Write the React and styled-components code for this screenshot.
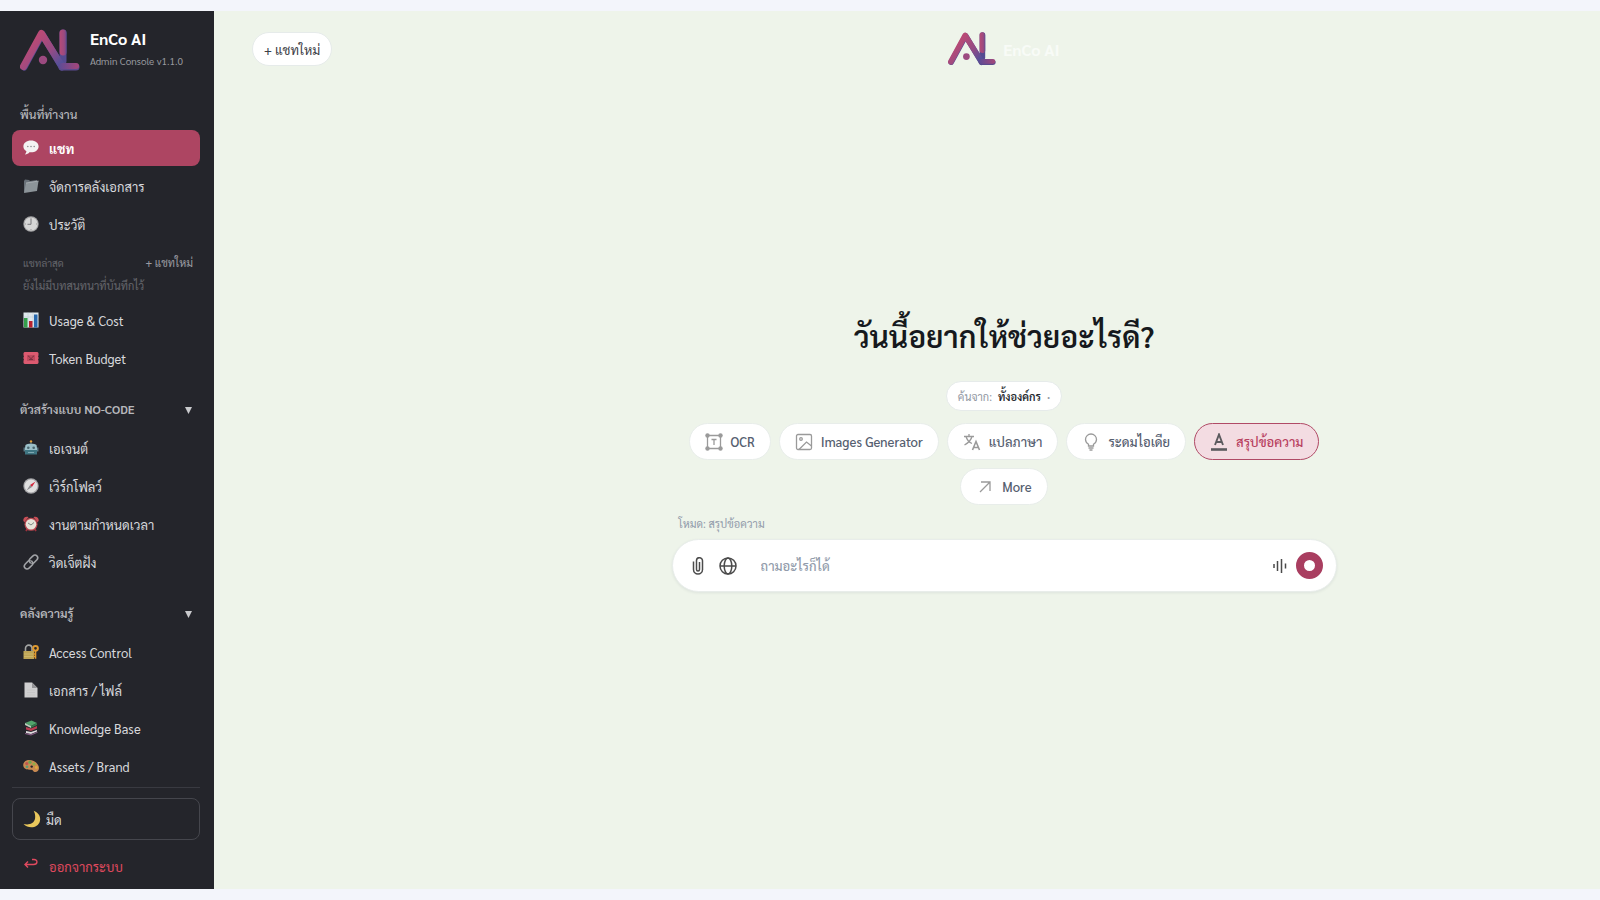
import React, { useState } from 'react';
import styled, { createGlobalStyle } from 'styled-components';

const GlobalStyle = createGlobalStyle`
  *, *::before, *::after { box-sizing: border-box; }

  body {
    margin: 0;
    background-color: #f3f5fb;
    font-family: Sarabun, "Noto Sans Thai Looped", Lato, "Noto Sans Thai", sans-serif;
    font-size: 13px;
    color: #1f2328;
  }

  button, input {
    font: inherit;
    color: inherit;
  }

  button { cursor: pointer; }
  a { text-decoration: none; }
`;

const Page = styled.div`
  display: flex;
  height: 100vh;
  padding: 11px 0;
`;

// Sidebar
const Sidebar = styled.aside`
  display: flex;
  flex-direction: column;
  flex: none;
  width: 214px;
  padding: 16px 14px 5px 12px;
  background-color: #24252b;
  color: #d7d8dc;
`;

const BrandRow = styled.div`
  display: flex;
  align-items: center;
  gap: 10px;
  padding-left: 8px;
  height: 46px;
  margin-bottom: 29px;
`;

const BrandName = styled.div`
  font-size: 16px;
  line-height: 22px;
  font-weight: 700;
  color: #ffffff;
`;

const BrandMeta = styled.div`
  font-size: 10px;
  line-height: 22px;
  white-space: nowrap;
  color: #97989e;
`;

const Nav = styled.nav`
  flex: 1;
  min-height: 0;
  overflow: hidden;
`;

const NavTitle = styled.h2`
  margin: 0 0 4px;
  padding: 0 8px;
  font-size: 12px;
  line-height: 24px;
  font-weight: 500;
  color: #b6b7bc;
`;

const NavToggle = styled.button`
  display: flex;
  align-items: center;
  justify-content: space-between;
  width: 100%;
  height: 24px;
  margin: 21px 0 9px;
  padding: 0 8px;
  border: 0;
  background: none;
  font-size: 12px;
  font-weight: 600;
  color: #b6b7bc;
`;

const NavList = styled.ul`
  display: flex;
  flex-direction: column;
  gap: 2px;
  margin: 0;
  padding: 0;
  list-style: none;
`;

const NavLink = styled.a`
  display: flex;
  align-items: center;
  gap: 10px;
  height: 36px;
  padding: 0 11px;
  border-radius: 8px;
  font-weight: ${(props) => (props.$active ? 700 : 400)};
  color: ${(props) => (props.$danger ? '#e04a5f' : props.$active ? '#ffffff' : '#d7d8dc')};
  background-color: ${(props) => (props.$active ? '#ad4562' : 'transparent')};
`;

const Recent = styled.div`
  padding: 9px 7px 5px 11px;
  font-size: 11px;
  line-height: 23px;
  color: #64656c;
`;

const RecentHead = styled.div`
  display: flex;
  justify-content: space-between;
  font-size: 10px;
`;

const RecentNew = styled.button`
  padding: 0;
  border: 0;
  background: none;
  font-size: 11px;
  color: #9a9ba1;
`;

const SidebarFooter = styled.div`
  padding-top: 10px;
  border-top: 1px solid #393a41;
`;

const ThemeButton = styled.button`
  display: flex;
  align-items: center;
  gap: 5px;
  width: 100%;
  height: 42px;
  margin-bottom: 8px;
  padding: 0 10px;
  border: 1px solid #45464d;
  border-radius: 8px;
  background: none;
`;

// Main area
const Main = styled.main`
  display: flex;
  flex-direction: column;
  flex: 1;
  min-width: 0;
  background-color: #eef4ea;
`;

const TopBar = styled.header`
  display: grid;
  grid-template-columns: 194px 1fr;
  align-items: center;
  height: 76px;
`;

const NewChat = styled.button`
  justify-self: start;
  height: 34px;
  margin-left: 38px;
  padding: 0 11px;
  border: 1px solid #e6ebea;
  border-radius: 17px;
  background-color: #ffffff;
  color: #3c4046;
`;

const TopBrand = styled.div`
  display: flex;
  align-items: center;
  justify-self: center;
  gap: 7px;
  font-size: 16px;
  font-weight: 700;
  color: #f8fbf7;
`;

const Hero = styled.section`
  display: flex;
  flex-direction: column;
  align-items: center;
  padding: 220px 0 0 194px;
`;

const Heading = styled.h1`
  margin: 0 0 16px;
  font-size: 30px;
  line-height: 58px;
  font-weight: 600;
  color: #16191d;
`;

const Scope = styled.button`
  display: flex;
  align-items: center;
  gap: 6px;
  height: 30px;
  margin-bottom: 12px;
  padding: 0 11px;
  border: 1px solid #e6ebea;
  border-radius: 15px;
  background-color: #ffffff;
  font-size: 11px;
  color: #9298a3;

  b {
    font-weight: 600;
    color: #24282d;
  }

  span { font-weight: 700; }
`;

const Chips = styled.div`
  display: flex;
  flex-wrap: wrap;
  justify-content: center;
  gap: 8px;
  width: 665px;
  max-width: 100%;
  margin-bottom: 8px;
`;

const Chip = styled.button`
  display: flex;
  align-items: center;
  gap: 8px;
  height: 37px;
  padding: 0 15px;
  border: 1px solid ${(props) => (props.$active ? '#b04a66' : '#e8edea')};
  border-radius: 19px;
  background-color: ${(props) => (props.$active ? '#f3dce2' : '#ffffff')};
  font-weight: 500;
  color: ${(props) => (props.$active ? '#b8415f' : '#566070')};

  svg { color: ${(props) => (props.$active ? '#5b5a5e' : '#9a9a9a')}; }
`;

const Composer = styled.form`
  width: 665px;
  max-width: 100%;
`;

const Mode = styled.label`
  display: block;
  padding-left: 7px;
  font-size: 11px;
  line-height: 22px;
  color: #929cab;
  margin-bottom: 4px;
`;

const InputBar = styled.div`
  display: flex;
  align-items: center;
  height: 53px;
  padding: 0 13px 0 16px;
  border: 1px solid #e8edea;
  border-radius: 27px;
  background-color: #ffffff;
  box-shadow: 0 1px 3px rgba(30, 40, 60, 0.08);
`;

const IconButton = styled.button`
  display: flex;
  margin-right: ${(props) => (props.$tight ? '7px' : '12px')};
  padding: 0;
  border: 0;
  background: none;
  color: #4b4b4b;
`;

const Prompt = styled.input`
  flex: 1;
  min-width: 0;
  padding: 0 12px;
  border: 0;
  outline: 0;
  background: none;
  font-weight: 500;

  &::placeholder {
    color: #929cab;
    opacity: 1;
  }
`;

const Record = styled.button`
  width: 27px;
  height: 27px;
  padding: 0;
  border: 8px solid #a93e60;
  border-radius: 50%;
  background-color: #ffffff;
`;

const Logo = ({ width, id }) => (
  <svg width={width} viewBox="0 0 60 44" fill="none" aria-hidden="true">
    <defs>
      <linearGradient id={id} x1="0" y1="0" x2="46" y2="44" gradientUnits="userSpaceOnUse">
        <stop offset="0.3" stopColor="#b84a76" />
        <stop offset="0.6" stopColor="#944b84" />
        <stop offset="0.85" stopColor="#54509a" />
        <stop offset="1" stopColor="#8a477f" />
      </linearGradient>
      <linearGradient id={`${id}-stem`} x1="40" y1="0" x2="47" y2="0" gradientUnits="userSpaceOnUse">
        <stop stopColor="#b34a78" />
        <stop offset="0.6" stopColor="#9b4a80" />
        <stop offset="1" stopColor="#554b91" />
      </linearGradient>
      <linearGradient id={`${id}-bar`} x1="38" y1="0" x2="60" y2="0" gradientUnits="userSpaceOnUse">
        <stop stopColor="#5a4c98" />
        <stop offset="1" stopColor="#a94678" />
      </linearGradient>
    </defs>
    <g strokeWidth="7" strokeLinecap="round" strokeLinejoin="round">
      <path d="M43 5v28" stroke="#554b91" />
      <path d="M43 5L43.100 24" stroke={`url(#${id}-stem)`} />
      <path d="M4 39 22 6l20 33" stroke="#554b91" />
      <path d="M3.500 38.500 21.500 5.500l20 32" stroke={`url(#${id})`} />
      <path d="M42 39h14" stroke="#5b4a8d" />
      <path d="M42 38h14" stroke={`url(#${id}-bar)`} strokeWidth="6" />
    </g>
    <circle cx="23" cy="32" r="4.200" fill="#9c4a80" />
  </svg>
);

const Emoji = ({ size = 16, children }) => (
  <svg width={size} height={size} viewBox="0 0 16 16" fill="none" aria-hidden="true">
    {children}
  </svg>
);

const glyphs = {
  chat: (
    <>
      <path d="M8 .5C3.600.5.4 3 .4 6.400c0 2 1.200 3.700 3 4.800-.1 1.300-.7 2.400-1.500 3.300 2-.2 3.600-1 4.500-2.300.5.1 1 .1 1.600.1 4.400 0 7.600-2.500 7.600-5.900S12.400.5 8 .5Z" fill="#f4f2f2" />
      <g fill="#8f8f93"><circle cx="4.800" cy="6.500" r="0.800" /><circle cx="8" cy="6.500" r="0.800" /><circle cx="11.200" cy="6.500" r="0.800" /></g>
    </>
  ),
  folder: (
    <>
      <path d="m1 3 1-1.500 4 .4 1 1.200 7-1.100v10L1 14Z" fill="#687078" />
      <path d="m3 5 12.500-2-1.500 10L1 15Z" fill="#8c9499" />
      <path d="m3 5 12.500-2" stroke="#c2c7ca" strokeWidth="0.600" />
    </>
  ),
  clock: (
    <>
      <circle cx="8" cy="8" r="7.700" fill="#a5a5a6" />
      <circle cx="8" cy="8" r="6.600" fill="#d6d6d6" />
      <path d="M8 3v5.300H4.500" stroke="#77777b" />
      <path d="M8 2v1M8 13v1M2 8h1M13 8h1" stroke="#999" />
    </>
  ),
  chart: (
    <>
      <path d="M.5.5h15v15H.5z" fill="#dfe8ed" />
      <path d="M.5 5h15M.5 10h15M5 .5v15M10 .5v15" stroke="#b9c9d2" strokeWidth="0.500" />
      <path d="M1 6h3.500v9.500H1z" fill="#35a04b" />
      <path d="M6 9h3.500v6.500H6z" fill="#b9222f" />
      <path d="M11 2.500h3.500v13H11z" fill="#2969ae" />
    </>
  ),
  ticket: (
    <>
      <path d="M1.500 2h13l1 1v2.500l-.6.800.6.700v2l-.6.700.6.800V13l-1 1h-13l-1-1v-2.500l.6-.8-.6-.7V7l.6-.7-.6-.8V3Z" fill="#dc5a70" />
      <path d="M4 5h8v6H4z" fill="#bd4a5e" />
      <path d="M5 6c2 0 2 3 3 3s1-3 3-3M6 9.500h4" stroke="#7d3040" />
    </>
  ),
  robot: (
    <>
      <circle cx="8" cy="1.500" r="1.200" fill="#e2a23b" />
      <path d="M7.500 2.500h1v2h-1z" fill="#718d96" />
      <path d="M2.500 5C4 3.300 12 3.300 13.500 5l.8 5c0 5-12.600 5-12.600 0Z" fill="#9cc1ca" />
      <path d="M2 10h12v4.500H2z" fill="#3f7582" />
      <path d="M.6 7.500h1.200v4H.6zM14.200 7.500h1.200v4h-1.200z" fill="#648894" />
      <circle cx="5.300" cy="7.800" r="1.300" fill="#4a6770" /><circle cx="10.700" cy="7.800" r="1.300" fill="#4a6770" />
      <path d="M5 12.500h6" stroke="#7fa9b3" />
    </>
  ),
  compass: (
    <>
      <circle cx="8" cy="8" r="7.700" fill="#a3a3a6" />
      <circle cx="8" cy="8" r="6.500" fill="#e0e0e0" />
      <path d="m12.500 3.500-3.600 5.400L7 7Z" fill="#d3273c" />
      <path d="m3.500 12.500 3.600-5.400L9 9Z" fill="#8c8c90" />
    </>
  ),
  alarm: (
    <>
      <path d="m3 15 2-3M13 15l-2-3" stroke="#9f323d" strokeWidth="1.800" />
      <path d="M.3 4.800C0 1.800 3 0 5.500 1.300L1.300 6.300ZM15.700 4.800c.3-3-2.700-4.800-5.200-3.500l4.200 5Z" fill="#c94f57" />
      <circle cx="8" cy="8.300" r="6.500" fill="#bb4a52" />
      <circle cx="8" cy="8.300" r="5.300" fill="#e6e4da" />
      <path d="m5 7 3 2 3-2.500" stroke="#7d8a83" />
    </>
  ),
  link: (
    <g stroke="#a1a3a7" strokeWidth="1.600" strokeLinecap="round" strokeLinejoin="round">
      <path d="M7.200 8.800C5.500 7 6 5.800 7 4.800l2.700-2.700c3-2.800 6.800.8 4 3.900L11 8.700c-.6.600-1.300.8-2 .7" />
      <path d="M8.800 7.200C10.500 9 10 10.200 9 11.200l-2.700 2.700c-3 2.800-6.800-.8-4-3.900L5 7.300c.6-.6 1.300-.8 2-.7" />
    </g>
  ),
  lock: (
    <>
      <path d="M2.500 8V4.500c0-4.500 6.500-4.500 6.500 0V8" stroke="#a3a5a4" strokeWidth="1.600" />
      <path d="M.5 7h10.500v8H.5z" fill="#bda455" />
      <path d="M1 10h9M1 12.500h9" stroke="#d6c378" strokeWidth="0.600" />
      <circle cx="12.500" cy="4.300" r="2.400" stroke="#e09a30" strokeWidth="2" />
      <path d="M12.500 6.500v8.200M12.500 10h-2M12.500 12.500h-2" stroke="#e09a30" strokeWidth="1.600" />
    </>
  ),
  file: (
    <>
      <path d="M1.500.5h7.500l5.500 5.500v9.500h-13Z" fill="#cfcfd0" />
      <path d="M9 .5V6h5.500Z" fill="#949497" />
      <path d="M4 8h8M4 10.500h8M4 13h8" stroke="#bdbdbf" strokeWidth="0.500" />
    </>
  ),
  books: (
    <>
      <path d="m2 3 6.500-2.500L14 3 8 6Z" fill="#51a36b" />
      <path d="m2 3 6 3v2L2 5Z" fill="#b9cfbd" /><path d="m8 6 6-3v2L8 8Z" fill="#34764b" />
      <path d="m3 7 5 1.500L14 6v2.500L8 11 3 9.500Z" fill="#b93d51" />
      <path d="m3 11 5 1 6-2v1.500L8 14l-5-1Z" fill="#dddadd" />
      <path d="m2 13 6 1.300 6.500-2.500v1L8 15.500 2 14Z" fill="#875d85" />
    </>
  ),
  palette: (
    <>
      <path d="M3.500 2.500C9 .8 16 5 16 10c0 3-2.500 4.500-4.500 4-1.500-.4-1.500-2-3-2.200C5.500 11.500 2.500 12 .9 9.500-.7 7 .5 3.500 3.500 2.500Z" fill="#c98a52" />
      <circle cx="3.800" cy="5.500" r="1.600" fill="#c0564f" /><circle cx="7" cy="4.200" r="1.600" fill="#6ba650" />
      <circle cx="11" cy="6" r="1.600" fill="#8fae45" /><circle cx="4" cy="8.800" r="1.400" fill="#5d9a72" />
      <circle cx="13.300" cy="9.500" r="1.400" fill="#e0a93c" /><circle cx="8.700" cy="8.600" r="1.200" fill="#24252b" />
    </>
  ),
  moon: <path d="M9.500.7C14 2.500 16 6 15 10c-1.500 6-10 7.300-14.500 2.500 5 1.200 9-.5 10-4 .7-2.600.3-5.400-1-7.800Z" fill="#e9c75c" />,
  exit: <path d="m5 3.500-3 3 3 3M2.500 6.500h8c4.500 0 4.500-5 .5-5H9" stroke="#e04a5f" strokeWidth="1.400" />,
};

const ToolIcon = ({ children, size = 18, strokeWidth = 1.3 }) => (
  <svg
    width={size}
    height={size}
    viewBox="0 0 18 18"
    fill="none"
    stroke="currentColor"
    strokeWidth={strokeWidth}
    aria-hidden="true"
  >
    {children}
  </svg>
);

const workspace = [
  { icon: 'chat', label: 'แชท', active: true },
  { icon: 'folder', label: 'จัดการคลังเอกสาร' },
  { icon: 'clock', label: 'ประวัติ' },
];

const usage = [
  { icon: 'chart', label: 'Usage & Cost' },
  { icon: 'ticket', label: 'Token Budget' },
];

const builder = [
  { icon: 'robot', label: 'เอเจนต์' },
  { icon: 'compass', label: 'เวิร์กโฟลว์' },
  { icon: 'alarm', label: 'งานตามกำหนดเวลา' },
  { icon: 'link', label: 'วิดเจ็ตฝัง' },
];

const knowledge = [
  { icon: 'lock', label: 'Access Control' },
  { icon: 'file', label: 'เอกสาร / ไฟล์' },
  { icon: 'books', label: 'Knowledge Base' },
  { icon: 'palette', label: 'Assets / Brand' },
];

const tools = [
  {
    label: 'OCR',
    icon: (
      <>
        <path d="M2.500 2.500h13v13h-13z" />
        <path d="M6.500 6.500h5M9 6.500v5.500" />
        <g fill="currentColor" stroke="none">
          <circle cx="2.500" cy="2.500" r="2.200" />
          <circle cx="15.500" cy="2.500" r="2.200" />
          <circle cx="2.500" cy="15.500" r="2.200" />
          <circle cx="15.500" cy="15.500" r="2.200" />
        </g>
      </>
    ),
  },
  {
    label: 'Images Generator',
    icon: (
      <>
        <rect x="1.500" y="1.500" width="15" height="15" rx="1.500" />
        <circle cx="6" cy="6" r="1.300" />
        <path d="m4 16.500 7.500-7.500 5 4" />
      </>
    ),
  },
  {
    label: 'แปลภาษา',
    icon: (
      <>
        <path d="M1 3.500h10M6 1v2.500M9 3.500C8 7.500 5 10 1.500 12M3 3.500C4 7 6.500 9.500 9 10.500" />
        <path d="m9.500 17 3.500-8.500 3.500 8.500M10.500 14.500h5" strokeWidth="1.600" />
      </>
    ),
  },
  {
    label: 'ระดมไอเดีย',
    icon: (
      <>
        <path d="M6.500 13v-1.800C4.500 10 3.500 8.500 3.500 6.500a5.500 5.500 0 0 1 11 0c0 2-1 3.500-3 4.700V13Z" />
        <path d="M6.500 15h5M7.500 17h3" />
      </>
    ),
  },
  {
    label: 'สรุปข้อความ',
    active: true,
    icon: (
      <>
        <path d="m5 12 4-10.500 4 10.500M6.500 9h5" strokeWidth="1.900" />
        <path d="M1 16.500h16" strokeWidth="2.600" />
      </>
    ),
  },
  { label: 'More', icon: <path d="m4 14 9.500-9.500M5 4h9v9" /> },
];

const NavItems = ({ items }) => (
  <NavList>
    {items.map((item) => (
      <li key={item.label}>
        <NavLink href="#" $active={item.active}>
          <Emoji>{glyphs[item.icon]}</Emoji>
          {item.label}
        </NavLink>
      </li>
    ))}
  </NavList>
);

const Caret = () => (
  <svg width="7" height="9" viewBox="0 0 7 9" aria-hidden="true">
    <path d="M0 2h7L3.500 9Z" fill="#c9cacd" />
  </svg>
);

const NavGroup = ({ title, items }) => {
  const [open, setOpen] = useState(true);

  return (
    <>
      <NavToggle type="button" aria-expanded={open} onClick={() => setOpen(!open)}>
        {title}
        <Caret />
      </NavToggle>
      {open && <NavItems items={items} />}
    </>
  );
};

const App = () => {
  const [text, setText] = useState('');

  return (
    <>
      <GlobalStyle />
      <Page>
        <Sidebar>
          <BrandRow>
            <Logo width={60} id="side-logo" />
            <div>
              <BrandName>EnCo AI</BrandName>
              <BrandMeta>Admin Console v1.1.0</BrandMeta>
            </div>
          </BrandRow>
          <Nav>
            <NavTitle>พื้นที่ทำงาน</NavTitle>
            <NavItems items={workspace} />
            <Recent>
              <RecentHead>
                <span>แชทล่าสุด</span>
                <RecentNew type="button">+ แชทใหม่</RecentNew>
              </RecentHead>
              <div>ยังไม่มีบทสนทนาที่บันทึกไว้</div>
            </Recent>
            <NavItems items={usage} />
            <NavGroup title="ตัวสร้างแบบ NO-CODE" items={builder} />
            <NavGroup title="คลังความรู้" items={knowledge} />
          </Nav>
          <SidebarFooter>
            <ThemeButton type="button">
              <Emoji size={18}>{glyphs.moon}</Emoji>
              มืด
            </ThemeButton>
            <NavLink href="#" $danger>
              <Emoji>{glyphs.exit}</Emoji>
              ออกจากระบบ
            </NavLink>
          </SidebarFooter>
        </Sidebar>

        <Main>
          <TopBar>
            <NewChat type="button">+ แชทใหม่</NewChat>
            <TopBrand>
              <Logo width={48} id="top-logo" />
              EnCo AI
            </TopBrand>
          </TopBar>
          <Hero>
            <Heading>วันนี้อยากให้ช่วยอะไรดี?</Heading>
            <Scope type="button">
              ค้นจาก: <b>ทั้งองค์กร</b> <span>·</span>
            </Scope>
            <Chips>
              {tools.map((tool) => (
                <Chip key={tool.label} type="button" $active={tool.active}>
                  <ToolIcon>{tool.icon}</ToolIcon>
                  {tool.label}
                </Chip>
              ))}
            </Chips>
            <Composer onSubmit={(e) => e.preventDefault()}>
              <Mode htmlFor="prompt">โหมด: สรุปข้อความ</Mode>
              <InputBar>
                <IconButton type="button" aria-label="แนบไฟล์">
                  <ToolIcon strokeWidth={1.5}>
                    <path d="M4.500 4.500v8a4.500 4.500 0 0 0 9 0V4M13.500 13V3.900a2.900 2.900 0 0 0-6-.4v9a1.500 1.500 0 0 0 3 0V5" />
                  </ToolIcon>
                </IconButton>
                <IconButton type="button" aria-label="ค้นหาเว็บ">
                  <ToolIcon strokeWidth={1.5}>
                    <circle cx="9" cy="9" r="8" />
                    <ellipse cx="9" cy="9" rx="3.800" ry="8" />
                    <path d="M1 9h16" />
                  </ToolIcon>
                </IconButton>
                <Prompt
                  id="prompt"
                  value={text}
                  onChange={(e) => setText(e.target.value)}
                  placeholder="ถามอะไรก็ได้"
                />
                <IconButton type="button" aria-label="เสียง" $tight>
                  <ToolIcon strokeWidth={1.5}>
                    <path d="M3 7v4M6.500 4v10M10.500 2v14M14.500 6.500v5" />
                  </ToolIcon>
                </IconButton>
                <Record type="submit" aria-label="ส่ง" />
              </InputBar>
            </Composer>
          </Hero>
        </Main>
      </Page>
    </>
  );
};

export default App;
